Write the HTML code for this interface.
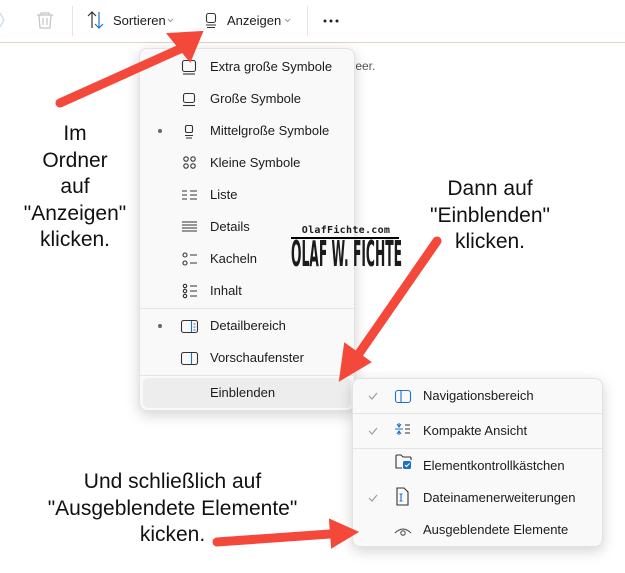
<!DOCTYPE html>
<html><head><meta charset="utf-8"><style>
*{margin:0;padding:0;box-sizing:border-box}
body{width:625px;height:573px;background:#fff;position:relative;overflow:hidden;font-family:"Liberation Sans",sans-serif;color:#1b1b1b}
.a{position:absolute}
.menu{position:absolute;background:#f9f9f9;border:1px solid #e2e2e2;border-radius:8px;box-shadow:0 4px 14px rgba(0,0,0,.18)}
.it{position:absolute;font-size:13px;line-height:16px;white-space:nowrap}
.sep{position:absolute;height:1px;background:#e4e4e4}
.ann{position:absolute;font-size:21px;line-height:26.5px;text-align:center;color:#111}
</style></head><body>
<div class="a" style="left:0;top:42px;width:625px;height:1px;background:#e3d3bf"></div>
<div class="a" style="left:72px;top:6px;width:1px;height:30px;background:#e5e5e5"></div>
<div class="a" style="left:307px;top:6px;width:1px;height:30px;background:#e5e5e5"></div>
<svg class="a" style="left:0;top:0" width="625" height="45">
<path d="M0 13 L4 20 L0 27" stroke="#cfe0f3" fill="none" stroke-width="1.5"/>
<g stroke="#c4c4c4" fill="none" stroke-width="1.2"><path d="M37 15h16M41 15v-2h8v2M39 15l1 13h10l1-13M43 18v7M47 18v7"/></g>
<g stroke="#333" fill="none" stroke-width="1.2"><path d="M92 28V12M88 16l4-4 4 4"/></g>
<g stroke="#1a73c9" fill="none" stroke-width="1.2"><path d="M99 12v16M95 24l4 4 4-4"/></g>
<path d="M168 19l2.5 2.5 2.5-2.5" stroke="#999" fill="none"/>
<g stroke="#333" fill="none" stroke-width="1.1"><rect x="206.5" y="13.5" width="9" height="9" rx="2"/><path d="M206 25h10M207 27.5h8"/></g>
<path d="M285 19l2.5 2.5 2.5-2.5" stroke="#999" fill="none"/>
<g fill="#222"><circle cx="325" cy="21" r="1.5"/><circle cx="331" cy="21" r="1.5"/><circle cx="337" cy="21" r="1.5"/></g>
</svg>
<div class="it" style="left:113px;top:13px">Sortieren</div>
<div class="it" style="left:227px;top:13px">Anzeigen</div>
<div class="a" style="left:340px;top:59px;font-size:12px;color:#555">st leer.</div>

<div class="menu" style="left:139px;top:48px;width:216px;height:363px"></div>
<div class="a" style="left:143px;top:378px;width:208px;height:30px;background:#ededed;border-radius:5px"></div>
<div class="sep" style="left:139px;top:308px;width:216px"></div>
<div class="sep" style="left:139px;top:375px;width:216px"></div>
<svg class="a" style="left:150px;top:50px" width="60" height="340" fill="none" stroke="#333" stroke-width="1.1">
<rect x="32.5" y="10.5" width="13" height="11" rx="2"/><path d="M33 24h12"/>
<rect x="33.5" y="43.5" width="11" height="9" rx="2"/><path d="M33 55.5h12"/>
<circle cx="10" cy="81" r="2" fill="#666" stroke="none"/>
<rect x="35.5" y="75.5" width="7" height="7" rx="1.5"/><path d="M35 85.5h8M36 88h6"/>
<circle cx="36" cy="109" r="2.2"/><circle cx="43" cy="109" r="2.2"/><circle cx="36" cy="116" r="2.2"/><circle cx="43" cy="116" r="2.2"/>
<path d="M32 141h5M32 145h5M32 149h5M40 141h7M40 145h7M40 149h7"/>
<path d="M32 172h15M32 175h15M32 178h15M32 181h15"/>
<circle cx="35" cy="205" r="2"/><circle cx="35" cy="213" r="2"/><path d="M40 205h7M40 213h7"/>
<circle cx="35" cy="236" r="1.7"/><circle cx="35" cy="241" r="1.7"/><circle cx="35" cy="246" r="1.7"/><path d="M40 236h7M40 241h7M40 246h7"/>
<circle cx="10" cy="276" r="2" fill="#666" stroke="none"/>
<rect x="31.5" y="270.5" width="16" height="12" rx="2"/><path d="M41.5 271v11" stroke="#1a73c9"/><path d="M43.5 274h2M43.5 277h2M43.5 280h2" stroke="#1a73c9"/>
<rect x="31.5" y="302.5" width="16" height="12" rx="2"/><path d="M41.5 303v11" stroke="#1a73c9"/>
<path d="M181 334l3 3-3 3" stroke="#666"/>
</svg>
<div class="it" style="left:210px;top:59px">Extra große Symbole</div>
<div class="it" style="left:210px;top:91px">Große Symbole</div>
<div class="it" style="left:210px;top:123px">Mittelgroße Symbole</div>
<div class="it" style="left:210px;top:155px">Kleine Symbole</div>
<div class="it" style="left:210px;top:187px">Liste</div>
<div class="it" style="left:210px;top:219px">Details</div>
<div class="it" style="left:210px;top:251px">Kacheln</div>
<div class="it" style="left:210px;top:283px">Inhalt</div>
<div class="it" style="left:210px;top:318px">Detailbereich</div>
<div class="it" style="left:210px;top:350px">Vorschaufenster</div>
<div class="it" style="left:210px;top:385px">Einblenden</div>

<div class="a" style="left:292px;top:225px;width:108px;text-align:center;font:bold 10px 'DejaVu Sans Mono',monospace;letter-spacing:.3px">OlafFichte.com</div>
<div class="a" style="left:291px;top:237px;width:108px;height:2px;background:#000"></div>
<div class="a" style="left:291px;top:238px;font:bold 36px/34px 'DejaVu Sans Condensed','Liberation Sans Narrow',sans-serif;transform:scaleX(.38);transform-origin:left top;white-space:nowrap">OLAF W. FICHTE</div>

<div class="menu" style="left:352px;top:378px;width:251px;height:169px"></div>
<div class="sep" style="left:352px;top:413px;width:251px"></div>
<div class="sep" style="left:352px;top:448px;width:251px"></div>
<svg class="a" style="left:360px;top:380px" width="70" height="165" fill="none" stroke-width="1.1">
<path d="M9 16l3 3 5-6M9 51l3 3 5-6M9 118l3 3 5-6" stroke="#999"/>
<rect x="35.5" y="10.5" width="15" height="12" rx="2.5" stroke="#1a73c9"/><path d="M41 11v11" stroke="#1a73c9"/>
<path d="M37 44l2 3 2-3M39 43v4M37 54l2-3 2 3M39 55v-4M35 49h8" stroke="#1a73c9"/><path d="M45 45h5M45 49h5M45 53h5" stroke="#333"/>
<path d="M36 80v-4a1 1 0 0 1 1-1h4l2 2h7a1 1 0 0 1 1 1v2M36 80v8h6" stroke="#333"/><rect x="43" y="81" width="8" height="8" rx="1.5" fill="#1a73c9"/><path d="M45 85l1.5 1.5 3-3" stroke="#fff"/>
<path d="M37 108h7l4 4v13h-11z" stroke="#333"/><path d="M41 114v7M39.5 114h3M39.5 121h3" stroke="#1a73c9"/>
<path d="M35 153q8-8 16 0" stroke="#555"/><circle cx="43" cy="153" r="2.2" stroke="#555"/>
</svg>
<div class="it" style="left:423px;top:388px">Navigationsbereich</div>
<div class="it" style="left:423px;top:423px">Kompakte Ansicht</div>
<div class="it" style="left:423px;top:458px">Elementkontrollkästchen</div>
<div class="it" style="left:423px;top:490px">Dateinamenerweiterungen</div>
<div class="it" style="left:423px;top:522px">Ausgeblendete Elemente</div>

<div class="ann" style="left:20px;top:121px;width:110px">Im<br>Ordner<br>auf<br>"Anzeigen"<br>klicken.</div>
<div class="ann" style="left:410px;top:176px;width:160px">Dann auf<br>"Einblenden"<br>klicken.</div>
<div class="ann" style="left:10px;top:469px;width:325px">Und schließlich auf<br>"Ausgeblendete Elemente"<br>kicken.</div>

<svg class="a" style="left:0;top:0" width="625" height="573">
<g fill="#f4493a" stroke="#f4493a" stroke-linecap="round">
<path d="M60 103L180 49" stroke-width="9"/>
<polygon points="202,32 168,34 190,61" stroke-width="2"/>
<path d="M437 241L358 355" stroke-width="9"/>
<polygon points="340,380 345,344 370,362" stroke-width="2"/>
<path d="M217 542L330 534" stroke-width="9"/>
<polygon points="357,532 330,520 332,547" stroke-width="2"/>
</g></svg>
</body></html>
